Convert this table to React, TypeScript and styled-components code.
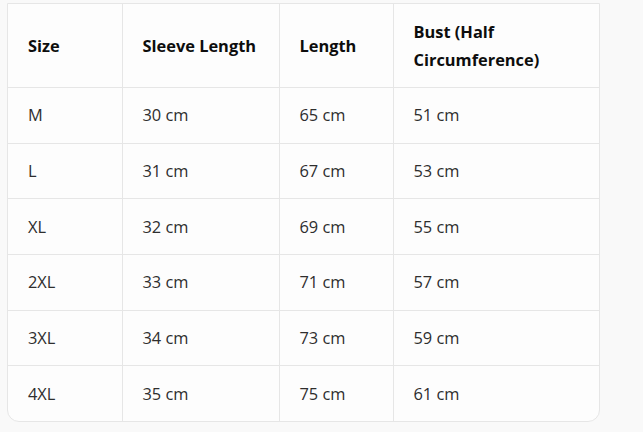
import styled, { createGlobalStyle } from "styled-components";

const GlobalStyle = createGlobalStyle`
  html, body {
    margin: 0;
    padding: 0;
    background: #f9f9f9;
  }
  body {
    font-family: "Open Sans", "Noto Sans", "Liberation Sans", sans-serif;
  }
`;

/* -------- Styled Components -------- */
const Page = styled.div`
  padding: 3px 0 0 7px;
`;

const Frame = styled.div`
  width: 593px;
  box-sizing: border-box;
  border: 1px solid #e6e6e6;
  border-radius: 0 0 12px 12px;
  overflow: hidden;
  background: #fdfdfd;
`;

const Table = styled.table`
  width: 100%;
  border-collapse: collapse;
  table-layout: fixed;
`;

const HeadCell = styled.th<{ $width: number }>`
  width: ${(p) => p.$width}px;
  box-sizing: border-box;
  padding: 13.5px 20px;
  text-align: left;
  font-size: 16.4px;
  line-height: 28px;
  font-weight: 700;
  color: #0d0d0d;
  border-left: 1px solid #e6e6e6;
  &:first-child {
    border-left: none;
  }
`;

const Row = styled.tr`
  border-top: 1px solid #e6e6e6;
`;

const Cell = styled.td`
  padding: 13.33px 20px;
  font-size: 16.4px;
  line-height: 28px;
  color: #2e2e2e;
  border-left: 1px solid #e6e6e6;
  &:first-child {
    border-left: none;
  }
`;

const columns = [
  { label: "Size", width: 114 },
  { label: "Sleeve Length", width: 157 },
  { label: "Length", width: 114 },
  { label: "Bust (Half Circumference)", width: 206 },
];

const rows = [
  ["M", "30 cm", "65 cm", "51 cm"],
  ["L", "31 cm", "67 cm", "53 cm"],
  ["XL", "32 cm", "69 cm", "55 cm"],
  ["2XL", "33 cm", "71 cm", "57 cm"],
  ["3XL", "34 cm", "73 cm", "59 cm"],
  ["4XL", "35 cm", "75 cm", "61 cm"],
];

export default function App() {
  return (
    <>
      <GlobalStyle />
      <Page>
        <Frame>
          <Table>
            <thead>
              <tr>
                {columns.map((c) => (
                  <HeadCell key={c.label} $width={c.width}>
                    {c.label}
                  </HeadCell>
                ))}
              </tr>
            </thead>
            <tbody>
              {rows.map((r) => (
                <Row key={r[0]}>
                  {r.map((v, i) => (
                    <Cell key={i}>{v}</Cell>
                  ))}
                </Row>
              ))}
            </tbody>
          </Table>
        </Frame>
      </Page>
    </>
  );
}
